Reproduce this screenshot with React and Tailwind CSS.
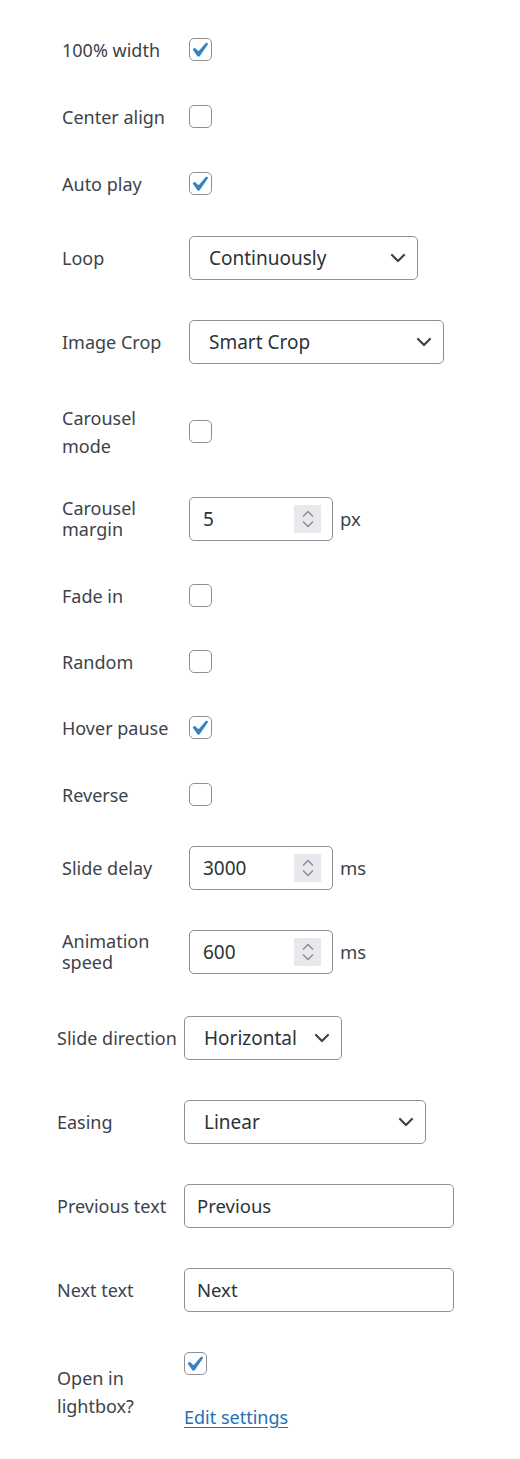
import React from "react";

const FONT = { fontFamily: '"Noto Sans", "Open Sans", sans-serif' };

function Check() {
  return (
    <svg width="23" height="23" viewBox="4 2.6 14 14" className="block">
      <path d="M14.83 4.89l1.34.94-5.81 8.38H9.02L5.78 9.67l1.34-1.25 2.57 2.4z" fill="#3582c4" />
    </svg>
  );
}

function Checkbox({ checked }) {
  return (
    <div className="w-[23px] h-[23px] rounded-[5px] border border-[#8c8f94] bg-white shrink-0 flex items-center justify-center">
      {checked ? <Check /> : null}
    </div>
  );
}

function Chevron() {
  return (
    <svg width="16" height="10" viewBox="0 0 16 10" className="block shrink-0">
      <polyline points="2,2 8,8 14,2" fill="none" stroke="#3c434a" strokeWidth="2.2" strokeLinecap="round" strokeLinejoin="round" />
    </svg>
  );
}

function Select({ value, w, pl = "pl-[19px]" }) {
  return (
    <div className={`${w} h-[44px] rounded-[5px] border border-[#8c8f94] bg-white flex items-center justify-between ${pl} pr-[11px] text-[19px] text-[#2c3338]`}>
      <span className="whitespace-nowrap">{value}</span>
      <Chevron />
    </div>
  );
}

function Spinner() {
  return (
    <div className="w-[27px] h-[28px] bg-[#e9e9ed] flex flex-col items-center justify-center gap-[4px]">
      <svg width="12" height="7" viewBox="0 0 12 7" className="block">
        <polyline points="1.5,6 6,1.5 10.5,6" fill="none" stroke="#8f8f9d" strokeWidth="1.6" strokeLinecap="round" strokeLinejoin="round" />
      </svg>
      <svg width="12" height="7" viewBox="0 0 12 7" className="block">
        <polyline points="1.5,1 6,5.5 10.5,1" fill="none" stroke="#8f8f9d" strokeWidth="1.6" strokeLinecap="round" strokeLinejoin="round" />
      </svg>
    </div>
  );
}

function NumberInput({ value, unit }) {
  return (
    <div className="flex items-center gap-[7px]">
      <div className="w-[144px] h-[44px] rounded-[5px] border border-[#8c8f94] bg-white flex items-center justify-between pl-[13px] pr-[11px] text-[19px] text-[#2c3338]">
        <span>{value}</span>
        <Spinner />
      </div>
      <span className="text-[18.5px] text-[#3c434a]">{unit}</span>
    </div>
  );
}

function TextInput({ value }) {
  return (
    <div className="w-[270px] h-[44px] rounded-[5px] border border-[#8c8f94] bg-white flex items-center pl-[12px] text-[18.5px] text-[#2c3338]">
      {value}
    </div>
  );
}

function Row({ label, children, h, mt, labelW = "w-[127px]", leading = "leading-[28px]" }) {
  return (
    <div className={`flex items-center ${h} ${mt}`}>
      <div className={`${labelW} shrink-0 text-[18px] ${leading} text-[#3c434a] whitespace-nowrap`}>{label}</div>
      {children}
    </div>
  );
}

export default function App() {
  return (
    <div className="w-[520px] min-h-[1459px] bg-white" style={FONT}>
      <div className="pt-[38px] pl-[62px]">
        <Row label="100% width" h="h-[23px]" mt="mt-0"><Checkbox checked /></Row>
        <Row label="Center align" h="h-[23px]" mt="mt-[44px]"><Checkbox /></Row>
        <Row label="Auto play" h="h-[23px]" mt="mt-[44px]"><Checkbox checked /></Row>
        <Row label="Loop" h="h-[44px]" mt="mt-[41px]"><Select value="Continuously" w="w-[229px]" /></Row>
        <Row label="Image Crop" h="h-[44px]" mt="mt-[40px]"><Select value="Smart Crop" w="w-[255px]" /></Row>
        <Row label={<>Carousel<br />mode</>} h="h-[23px]" mt="mt-[56px]"><Checkbox /></Row>
        <Row label={<>Carousel<br />margin</>} h="h-[44px]" mt="mt-[54px]" leading="leading-[21px]"><NumberInput value="5" unit="px" /></Row>
        <Row label="Fade in" h="h-[23px]" mt="mt-[43px]"><Checkbox /></Row>
        <Row label="Random" h="h-[23px]" mt="mt-[43px]"><Checkbox /></Row>
        <Row label="Hover pause" h="h-[23px]" mt="mt-[43px]"><Checkbox checked /></Row>
        <Row label="Reverse" h="h-[23px]" mt="mt-[44px]"><Checkbox /></Row>
        <Row label="Slide delay" h="h-[44px]" mt="mt-[40px]"><NumberInput value="3000" unit="ms" /></Row>
        <Row label={<>Animation<br />speed</>} h="h-[44px]" mt="mt-[40px]" leading="leading-[21px]"><NumberInput value="600" unit="ms" /></Row>
      </div>
      <div className="pl-[57px]">
        <Row label="Slide direction" h="h-[44px]" mt="mt-[42px]"><Select value="Horizontal" w="w-[158px]" /></Row>
        <Row label="Easing" h="h-[44px]" mt="mt-[40px]"><Select value="Linear" w="w-[242px]" /></Row>
        <Row label="Previous text" h="h-[44px]" mt="mt-[40px]"><TextInput value="Previous" /></Row>
        <Row label="Next text" h="h-[44px]" mt="mt-[40px]"><TextInput value="Next" /></Row>
        <div className="flex items-start mt-[40px]">
          <div className="w-[127px] shrink-0 mt-[12px] text-[18px] leading-[28px] text-[#3c434a]">Open in<br />lightbox?</div>
          <div className="flex flex-col items-start">
            <Checkbox checked />
            <a href="#" className="mt-[28px] text-[18px] leading-[28px] text-[#2271b1] underline underline-offset-[3px]">Edit settings</a>
          </div>
        </div>
      </div>
    </div>
  );
}
